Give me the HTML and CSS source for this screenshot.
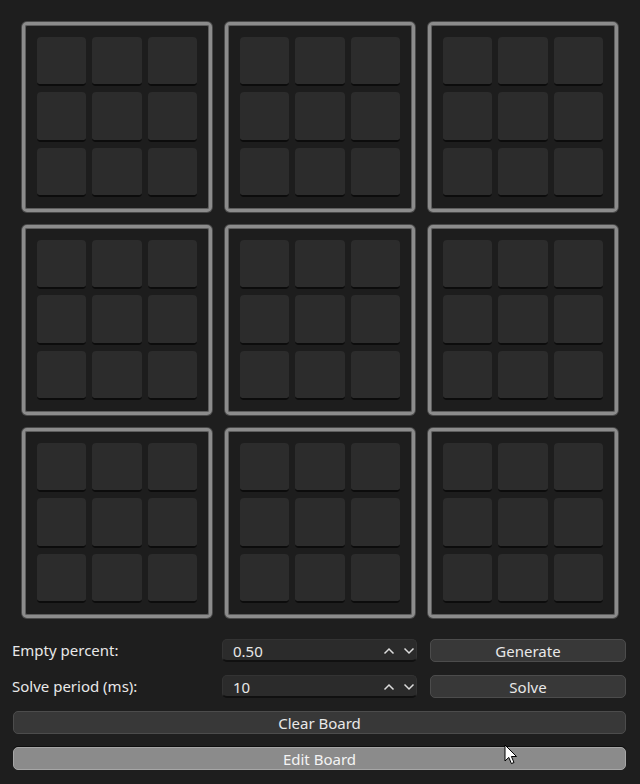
FILE: index.html
```html
<!DOCTYPE html>
<html>
<head>
<meta charset="utf-8">
<link rel="stylesheet" href="styles.css">
</head>
<body>
<div class="app">
  <div class="board">
    <div class="box"><div class="cell"></div><div class="cell"></div><div class="cell"></div><div class="cell"></div><div class="cell"></div><div class="cell"></div><div class="cell"></div><div class="cell"></div><div class="cell"></div></div>
    <div class="box"><div class="cell"></div><div class="cell"></div><div class="cell"></div><div class="cell"></div><div class="cell"></div><div class="cell"></div><div class="cell"></div><div class="cell"></div><div class="cell"></div></div>
    <div class="box"><div class="cell"></div><div class="cell"></div><div class="cell"></div><div class="cell"></div><div class="cell"></div><div class="cell"></div><div class="cell"></div><div class="cell"></div><div class="cell"></div></div>
    <div class="box"><div class="cell"></div><div class="cell"></div><div class="cell"></div><div class="cell"></div><div class="cell"></div><div class="cell"></div><div class="cell"></div><div class="cell"></div><div class="cell"></div></div>
    <div class="box"><div class="cell"></div><div class="cell"></div><div class="cell"></div><div class="cell"></div><div class="cell"></div><div class="cell"></div><div class="cell"></div><div class="cell"></div><div class="cell"></div></div>
    <div class="box"><div class="cell"></div><div class="cell"></div><div class="cell"></div><div class="cell"></div><div class="cell"></div><div class="cell"></div><div class="cell"></div><div class="cell"></div><div class="cell"></div></div>
    <div class="box"><div class="cell"></div><div class="cell"></div><div class="cell"></div><div class="cell"></div><div class="cell"></div><div class="cell"></div><div class="cell"></div><div class="cell"></div><div class="cell"></div></div>
    <div class="box"><div class="cell"></div><div class="cell"></div><div class="cell"></div><div class="cell"></div><div class="cell"></div><div class="cell"></div><div class="cell"></div><div class="cell"></div><div class="cell"></div></div>
    <div class="box"><div class="cell"></div><div class="cell"></div><div class="cell"></div><div class="cell"></div><div class="cell"></div><div class="cell"></div><div class="cell"></div><div class="cell"></div><div class="cell"></div></div>
  </div>

  <div class="controls">
    <div class="row">
      <div class="label">Empty percent:</div>
      <div class="spin">
        <span class="value">0.50</span>
        <span class="arrows">
          <svg width="12" height="8" viewBox="0 0 12 8"><path d="M1.5 6.5 L6 2 L10.5 6.5" fill="none" stroke="#dcdcdc" stroke-width="1.5"/></svg>
          <svg width="12" height="8" viewBox="0 0 12 8"><path d="M1.5 1.5 L6 6 L10.5 1.5" fill="none" stroke="#dcdcdc" stroke-width="1.5"/></svg>
        </span>
      </div>
      <button class="btn side">Generate</button>
    </div>
    <div class="row">
      <div class="label">Solve period (ms):</div>
      <div class="spin">
        <span class="value">10</span>
        <span class="arrows">
          <svg width="12" height="8" viewBox="0 0 12 8"><path d="M1.5 6.5 L6 2 L10.5 6.5" fill="none" stroke="#dcdcdc" stroke-width="1.5"/></svg>
          <svg width="12" height="8" viewBox="0 0 12 8"><path d="M1.5 1.5 L6 6 L10.5 1.5" fill="none" stroke="#dcdcdc" stroke-width="1.5"/></svg>
        </span>
      </div>
      <button class="btn side">Solve</button>
    </div>
    <button class="btn wide">Clear Board</button>
    <button class="btn wide active">Edit Board</button>
  </div>

  <svg class="cursor" width="14" height="22" viewBox="0 0 14 22"><path d="M1 1 L1 17 L4.8 13.4 L7.4 19.6 L10 18.5 L7.4 12.5 L12.5 12.5 Z" fill="#ffffff" stroke="#000000" stroke-width="1" stroke-linejoin="round"/></svg>
</div>
</body>
</html>
```
FILE: styles.css
```css
html, body {
  margin: 0;
  padding: 0;
  background: #1e1e1e;
}
.app {
  position: relative;
  width: 640px;
  height: 784px;
  font-family: "Noto Sans", "Open Sans", sans-serif;
  font-size: 15px;
  color: #e8e8e8;
}
.board {
  display: grid;
  grid-template-columns: repeat(3, 190px);
  grid-auto-rows: 190px;
  gap: 13px;
  padding: 22px 0 0 22px;
}
.box {
  box-sizing: border-box;
  border: 3px solid #8c8c8c;
  border-radius: 5px;
  box-shadow: inset 0 0 0 1px #5e5e5e, 0 0 0 1px #4a4a4a;
  background: #1d1d1d;
  padding: 12px;
  display: grid;
  grid-template-columns: repeat(3, 1fr);
  grid-template-rows: repeat(3, 1fr);
  gap: 6px;
}
.cell {
  background: #2c2c2c;
  border-radius: 4px;
  border-bottom: 2px solid #0c0c0c;
}
.controls {
  display: flex;
  flex-direction: column;
  padding: 21px 14px 0 12px;
}
.row {
  display: grid;
  grid-template-columns: 210px 195px 1fr;
  height: 23px;
  margin-bottom: 13px;
  align-items: center;
}
.label {
  line-height: 23px;
}
.spin {
  box-sizing: border-box;
  height: 23px;
  background: #2b2b2b;
  border: 1px solid #333333;
  border-radius: 5px;
  border-bottom: 2px solid #101010;
  display: flex;
  align-items: center;
  justify-content: space-between;
  padding: 1px 1px 0 10px;
}
.arrows {
  display: flex;
  gap: 8px;
}
.btn {
  box-sizing: border-box;
  height: 23px;
  font-family: inherit;
  font-size: 15px;
  color: #e8e8e8;
  background: #383838;
  border: 1px solid #4c4c4c;
  border-radius: 5px;
  padding: 0;
  line-height: 20px;
}
.side {
  margin-left: 13px;
}
.wide {
  margin-left: 1px;
  margin-bottom: 13px;
  width: 613px;
}
.active {
  background: #8b8b8b;
  border-color: #a6a6a6;
  box-shadow: 0 -1px 0 #0e0e0e;
  color: #f4f4f4;
}
.cursor {
  position: absolute;
  left: 504px;
  top: 744px;
}
```
